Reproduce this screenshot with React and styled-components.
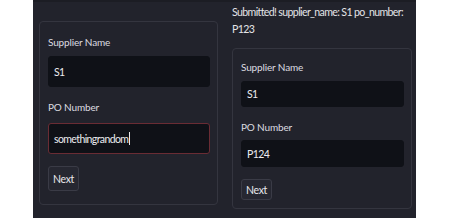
import React from "react";
import styled, { createGlobalStyle } from "styled-components";

const Global = createGlobalStyle`
  html, body { margin: 0; padding: 0; background: #ffffff; }
  body { font-family: "Lato", "Noto Sans", sans-serif; }
`;

const Panel = styled.div`
  margin-left: 33px;
  width: 383px;
  height: 218px;
  box-sizing: border-box;
  background: #22232c;
  border-top: 2px solid #1c1d24;
  padding: 0 4px 0 6px;
  display: grid;
  grid-template-columns: 179px 180px;
  column-gap: 14px;
  align-items: start;
`;

const Column = styled.div`
  display: flex;
  flex-direction: column;
  padding-top: ${(p) => p.$top}px;
`;

const Message = styled.div`
  color: #e4e4e8;
  font-size: 10.6px;
  letter-spacing: -0.64px;
  line-height: 17px;
  margin-bottom: 10px;
  white-space: nowrap;
`;

const Card = styled.div`
  box-sizing: border-box;
  border: 1px solid #34353f;
  border-radius: 4px;
  height: ${(p) => p.$h}px;
  padding: ${(p) => (p.$compact ? "11px 7px 0 8px" : "13px 7px 0 8px")};
  display: flex;
  flex-direction: column;
`;

const Label = styled.div`
  color: #dcdce0;
  font-size: 10px;
  letter-spacing: -0.15px;
  line-height: 14px;
  margin-bottom: ${(p) => p.$mb}px;
  margin-top: ${(p) => p.$mt || 0}px;
`;

const InputBox = styled.div`
  box-sizing: border-box;
  height: ${(p) => p.$h}px;
  background: #0f1117;
  border: 1px solid ${(p) => (p.$focused ? "#6a2c34" : "#0f1117")};
  border-radius: 3px;
  padding-left: 5px;
  display: flex;
  align-items: center;
  color: #ececf0;
  font-size: 10.5px;
  letter-spacing: -0.6px;
`;

const Caret = styled.span`
  display: inline-block;
  width: 1px;
  height: 13px;
  background: #e8e8ea;
  margin-left: 1px;
`;

const Button = styled.button`
  align-self: flex-start;
  box-sizing: border-box;
  width: 31px;
  height: ${(p) => p.$h}px;
  margin-top: 12px;
  background: #262731;
  border: 1px solid #3a3b46;
  border-radius: 3px;
  color: #e8e8ec;
  font-family: inherit;
  font-size: 10.5px;
  letter-spacing: -0.3px;
  padding: 0;
`;

export default function App() {
  return (
    <>
      <Global />
      <Panel>
        <Column $top={19}>
          <Card $h={184}>
            <Label $mb={7}>Supplier Name</Label>
            <InputBox $h={31}>S1</InputBox>
            <Label $mt={13} $mb={9}>PO Number</Label>
            <InputBox $h={31} $focused>
              somethingrandom
              <Caret />
            </InputBox>
            <Button $h={25}>Next</Button>
          </Card>
        </Column>
        <Column $top={2}>
          <Message>
            Submitted! supplier_name: S1 po_number:
            <br />
            P123
          </Message>
          <Card $h={161} $compact>
            <Label $mb={7}>Supplier Name</Label>
            <InputBox $h={26}>S1</InputBox>
            <Label $mt={13} $mb={6}>PO Number</Label>
            <InputBox $h={27}>P124</InputBox>
            <Button $h={21}>Next</Button>
          </Card>
        </Column>
      </Panel>
    </>
  );
}
